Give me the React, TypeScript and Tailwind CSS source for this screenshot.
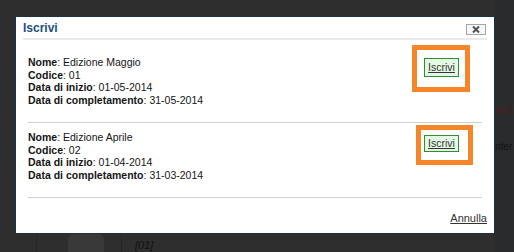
const font = { fontFamily: '"Liberation Sans", Arial, sans-serif' };

type Edition = {
  nome: string;
  codice: string;
  inizio: string;
  fine: string;
  btnTop: string;
  mark: string;
};

const editions: Edition[] = [
  {
    nome: 'Edizione Maggio',
    codice: '01',
    inizio: '01-05-2014',
    fine: '31-05-2014',
    btnTop: 'mt-[2px] h-[19px]',
    mark: '-left-[12px] -top-[13px] -right-[11px] -bottom-[15px]',
  },
  {
    nome: 'Edizione Aprile',
    codice: '02',
    inizio: '01-04-2014',
    fine: '31-03-2014',
    btnTop: 'mt-[4px] h-[17px]',
    mark: '-left-[8px] -top-[10px] -right-[14px] -bottom-[13px]',
  },
];

function Row({ e }: { e: Edition }) {
  return (
    <div className="flex justify-between pt-[8px] pb-[16px] border-b border-[#cfcfcf]">
      <div className="text-[10.5px] leading-[12.5px] text-[#151515]">
        <div><b>Nome</b>: {e.nome}</div>
        <div><b>Codice</b>: {e.codice}</div>
        <div><b>Data di inizio</b>: {e.inizio}</div>
        <div><b>Data di completamento</b>: {e.fine}</div>
      </div>
      <div className={`relative mr-[23px] self-start ${e.btnTop}`}>
        {/* orange annotation */}
        <div className={`absolute border-[5px] border-[#f7862b] ${e.mark}`} />
        <button className="h-full w-[35px] flex items-center justify-center border border-[#2f8f2f] bg-[#e3f9e3] text-[10.5px] leading-[13px] text-[#333] underline">
          Iscrivi
        </button>
      </div>
    </div>
  );
}

export default function App() {
  return (
    <div className="relative w-[514px] h-[252px] overflow-hidden bg-[#2e2e2e]" style={font}>
      {/* darkened page behind */}
      <div className="flex h-full">
        <div className="w-[495px] flex flex-col justify-end">
          <div className="flex h-[18px]">
            <div className="w-[37px] border-r border-[#252525]" />
            <div className="w-[85px] border-r border-[#252525] flex items-start pl-[31px]">
              <div className="w-[36px] h-[18px] bg-[#393939] rounded-t-[6px]" />
            </div>
            <div className="pl-[13px] pt-[3px] text-[11px] italic text-[#111]">[01]</div>
          </div>
        </div>
        <div className="flex-1 bg-[#292b2c] pt-[101px] text-[12px] text-[#4a1f1f] font-bold">
          <div>re i</div>
          <div className="mt-[20px] text-[10px] font-normal text-[#141414]">nfer</div>
        </div>
      </div>

      {/* modal dialog */}
      <div className="absolute left-[15px] top-[16px] w-[480px] h-[218px] bg-white border border-[#1d3446] px-[7px] flex flex-col">
        <div className="flex justify-between items-start pt-[4px] pb-[3px] border-b-2 border-[#ebebeb]">
          <div className="text-[12px] leading-[14px] font-bold text-[#1f4f7f]">Iscrivi</div>
          <button className="mt-[3px] mr-[1px] w-[20px] h-[11px] border border-[#a6a6a6] bg-[#f6f6f6] flex items-center justify-center">
            <svg width="8" height="7" viewBox="0 0 8 7">
              <path d="M1 0.5L7 6.5M7 0.5L1 6.5" stroke="#505050" strokeWidth="2" />
            </svg>
          </button>
        </div>
        <div className="px-[5px] pt-[8px]">
          {editions.map((e) => (
            <Row key={e.codice} e={e} />
          ))}
        </div>
        <div className="flex justify-end pt-[14px]">
          <span className="text-[11px] leading-[13px] text-[#333] underline">Annulla</span>
        </div>
      </div>
    </div>
  );
}
